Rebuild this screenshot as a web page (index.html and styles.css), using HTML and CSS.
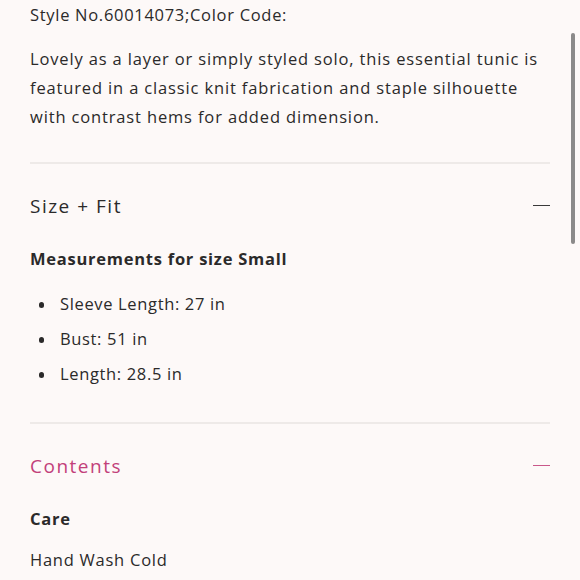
FILE: index.html
```html
<!DOCTYPE html>
<html>
<head>
<meta charset="utf-8">
<link rel="stylesheet" href="styles.css">
</head>
<body>
<div class="page">
  <p class="style-no">Style No.60014073;Color Code:</p>
  <p class="desc">Lovely as a layer or simply styled solo, this essential tunic is featured in a classic knit fabrication and staple silhouette with contrast hems for added dimension.</p>
  <section class="acc">
    <div class="acc-head">
      <span class="acc-title">Size + Fit</span>
      <span class="minus"></span>
    </div>
    <h4 class="sub">Measurements for size Small</h4>
    <ul class="list">
      <li>Sleeve Length: 27 in</li>
      <li>Bust: 51 in</li>
      <li>Length: 28.5 in</li>
    </ul>
  </section>
  <section class="acc active">
    <div class="acc-head">
      <span class="acc-title">Contents</span>
      <span class="minus"></span>
    </div>
    <h4 class="sub">Care</h4>
    <p class="care-text">Hand Wash Cold</p>
  </section>
</div>
<div class="scrollbar"></div>
</body>
</html>
```
FILE: styles.css
```css
html, body {
  margin: 0;
  padding: 0;
  background: #fdf9f8;
  overflow: hidden;
}
body {
  font-family: "Open Sans", "Liberation Sans", sans-serif;
  color: #2b2a2a;
  width: 580px;
  height: 580px;
}
.page {
  padding: 0 30px;
}
.style-no {
  margin: 0;
  padding-top: 3px;
  font-size: 16.5px;
  line-height: 24px;
  letter-spacing: 0.7px;
}
.desc {
  margin: 17px 0 0;
  font-size: 16.5px;
  line-height: 29px;
  letter-spacing: 0.85px;
}
.acc {
  border-top: 2px solid #eeeae8;
  margin-top: 31px;
}
.acc + .acc {
  margin-top: 37px;
}
.acc-head {
  display: flex;
  justify-content: space-between;
  align-items: center;
  height: 83px;
}
.acc-title {
  font-size: 19px;
  letter-spacing: 1.5px;
}
.minus {
  width: 17px;
  height: 1.5px;
  background: #3a3a3a;
}
.active .acc-title { color: #c2407a; }
.active .minus { background: #c9588a; }
.sub {
  margin: 1px 0 0;
  font-size: 16.5px;
  font-weight: 700;
  letter-spacing: 0.75px;
  line-height: 22px;
}
.list {
  list-style: none;
  margin: 23px 0 0;
  padding: 0;
}
.list li {
  position: relative;
  padding-left: 30px;
  font-size: 16.5px;
  line-height: 22px;
  letter-spacing: 0.65px;
  margin-bottom: 13px;
}
.list li:last-child {
  margin-bottom: 0;
}
.list li::before {
  content: "";
  position: absolute;
  left: 8.5px;
  top: 9px;
  width: 5.5px;
  height: 5.5px;
  border-radius: 50%;
  background: #2b2a2a;
}
.care-text {
  margin: 19px 0 0;
  font-size: 16.5px;
  line-height: 22px;
  letter-spacing: 0.75px;
}
.scrollbar {
  position: absolute;
  left: 571px;
  top: 33px;
  width: 4px;
  height: 211px;
  border-radius: 2px;
  background: #8b8a8a;
}
```
